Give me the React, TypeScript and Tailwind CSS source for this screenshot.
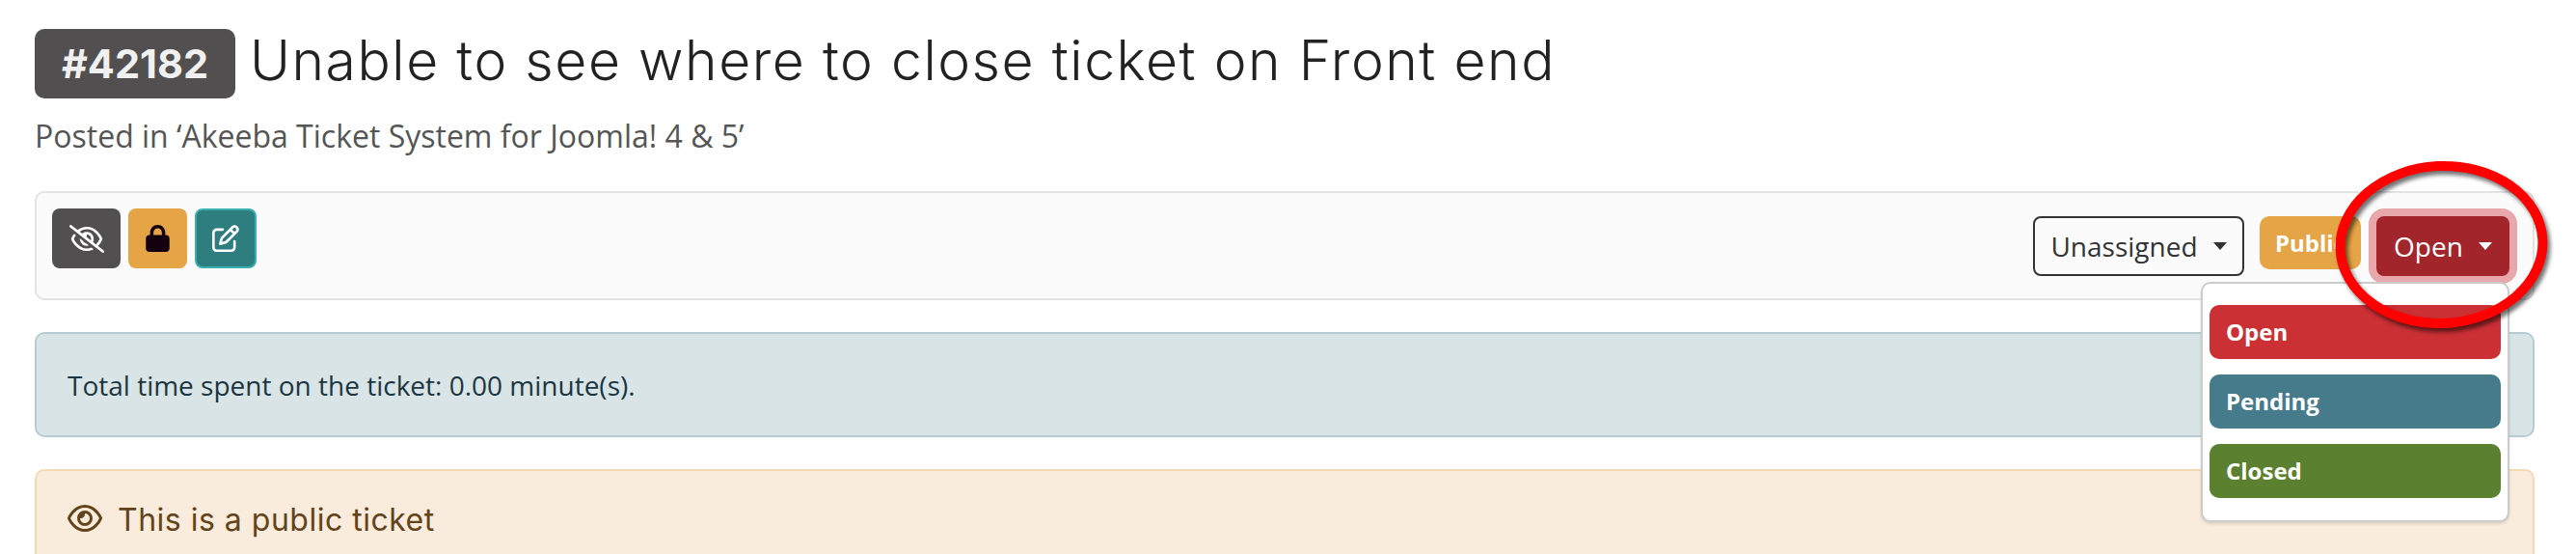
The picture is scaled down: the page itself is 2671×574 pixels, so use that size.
import { FaLock, FaRegEye, FaRegEyeSlash, FaRegPenToSquare } from 'react-icons/fa6';

const Caret = ({ color }: { color: string }) => (
  <span className={`ml-[16px] inline-block h-0 w-0 border-x-[7.5px] border-t-[8px] border-x-transparent ${color}`} />
);

const statuses = [
  { label: 'Open', bg: 'bg-[#cb3035]' },
  { label: 'Pending', bg: 'bg-[#467b8b]' },
  { label: 'Closed', bg: 'bg-[#5b8030]' },
];

const App = () => {
  return (
    <div className="relative h-[574px] overflow-hidden bg-white pl-9 pr-[43px] pt-[30px] font-['Open_Sans',sans-serif] text-[#333]">
      {/* Title */}
      <div className="flex h-[72px] items-center gap-[15px]">
        <span className="flex h-[72px] w-[208px] items-center justify-center rounded-[10px] bg-[#514f4f] font-['Inter',sans-serif] text-[41.5px] font-bold text-[#f0f0f0]">
          #42182
        </span>
        <h1 className="pb-[8px] font-['Inter',sans-serif] text-[57px] font-light leading-none tracking-[1.55px] text-[#222]">
          Unable to see where to close ticket on Front end
        </h1>
      </div>
      <p className="mt-[19px] text-[32px] leading-[40px] text-[#555]">
        Posted in ‘Akeeba Ticket System for Joomla! 4 &amp; 5’
      </p>

      {/* Toolbar */}
      <div className="mt-[37px] flex h-[113px] justify-between rounded-[10px] border-2 border-[#e3e3e3] bg-[#fbfbfb] pl-4 pr-[24px] pt-4">
        <div className="flex h-[62px] gap-2">
          <button className="flex w-[71px] items-center justify-center rounded-lg bg-[#514f4f] text-white">
            <FaRegEyeSlash className="h-[29px] w-[36px]" />
          </button>
          <button className="flex w-[61px] items-center justify-center rounded-lg bg-[#e5a445] text-[#14000f]">
            <FaLock className="h-[28px] w-[25px]" />
          </button>
          <button className="flex w-[64px] items-center justify-center rounded-lg border-2 border-[#39aeb1] bg-[#2e7d7f] text-white">
            <FaRegPenToSquare className="h-[28px] w-[28px]" />
          </button>
        </div>
        <div className="flex items-start gap-[16px] pt-2">
          <button className="flex h-[62px] w-[219px] items-center justify-center rounded-lg border-2 border-[#333] text-[28px] text-[#333]">
            Unassigned
            <Caret color="border-t-[#333]" />
          </button>
          <span className="flex h-[55px] w-[105px] items-center justify-center rounded-[10px] bg-[#e5a445] text-[24px] font-bold text-white">
            Public
          </span>
          <div className="relative">
            <button className="flex h-[62px] w-[138px] items-center justify-center rounded-lg bg-[#a1252b] text-[28px] text-white ring-8 ring-[#e8a7aa]">
              Open
              <Caret color="border-t-white" />
            </button>
            <div className="absolute right-0 top-[68px] flex w-[320px] flex-col gap-4 rounded-[10px] border-2 border-[#ccc] bg-white px-[7px] pb-[23px] pt-[22px] shadow-[0_2px_3px_rgba(0,0,0,0.12)]">
              {statuses.map(({ label, bg }) => (
                <div key={label} className={`flex h-[56px] items-center rounded-[10px] pl-[17px] text-[24px] font-bold text-white ${bg}`}>
                  {label}
                </div>
              ))}
            </div>
          </div>
        </div>
      </div>

      {/* Alerts */}
      <div className="mt-[33px] flex h-[109px] items-center rounded-[10px] border-2 border-[#b7cbd3] bg-[#d9e4e6] pl-[32px] text-[28px] text-[#1c3641]">
        Total time spent on the ticket: 0.00 minute(s).
      </div>
      <div className="mt-[33px] flex h-[140px] items-start gap-[16px] rounded-[10px] border-2 border-[#f5d9b5] bg-[#faecdc] pl-[32px] pt-[33px] font-['Inter',sans-serif] text-[32px] leading-[36px] tracking-[0.5px] text-[#63431a]">
        <FaRegEye className="h-[32px] w-[36px] shrink-0" />
        This is a public ticket
      </div>

      {/* Red annotation circle drawn over the screenshot */}
      <svg className="absolute left-[2415px] top-[160px] h-[190px] w-[240px] drop-shadow-[3px_4px_2px_rgba(0,0,0,0.55)]" viewBox="0 0 240 190" fill="none">
        <ellipse cx="116.5" cy="93.5" rx="105" ry="81.5" stroke="#ff0000" strokeWidth="10" transform="rotate(-3 116.5 93.5)" />
      </svg>
    </div>
  );
};

export default App;
